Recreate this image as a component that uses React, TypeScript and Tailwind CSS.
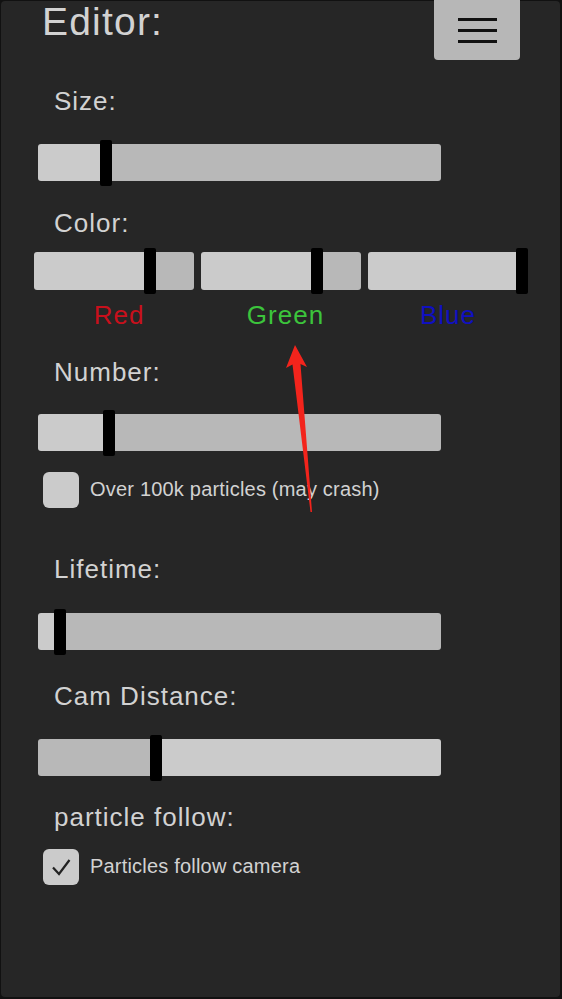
import React from "react"

type SliderProps = {
  left: number
  width: number
  reverse?: boolean
  full?: boolean
}

const LIGHT = "bg-[#cbcbcb]"
const DARK = "bg-[#b8b8b8]"

function Slider({ left, width, reverse, full }: SliderProps) {
  return (
    <div className="flex items-center h-[37px]" style={{ width }}>
      <div className={`h-full rounded-l-[3px] ${reverse ? DARK : LIGHT}`} style={{ width: left }} />
      <div className="w-[12px] h-[46px] shrink-0 rounded-[2px] bg-black" />
      {!full && <div className={`h-full flex-1 rounded-r-[3px] ${reverse ? LIGHT : DARK}`} />}
    </div>
  )
}

function ColorSlider({ left, full }: { left: number; full?: boolean }) {
  return (
    <div className="flex items-center h-[38px] w-[160px]">
      <div className={`h-full rounded-l-[3px] ${LIGHT} ${full ? "flex-1" : ""}`} style={full ? undefined : { width: left }} />
      <div className="w-[12px] h-[46px] shrink-0 rounded-[2px] bg-black" />
      {!full && <div className={`h-full flex-1 rounded-r-[3px] ${DARK}`} />}
    </div>
  )
}

function Label({ children, className = "" }: { children: React.ReactNode; className?: string }) {
  return <div className={`pl-[53px] text-[26px] leading-none tracking-[1px] text-[#d2d2d2] ${className}`}>{children}</div>
}

function Check({ checked, text, className = "" }: { checked?: boolean; text: string; className?: string }) {
  return (
    <div className={`flex items-center pl-[42px] gap-[11px] ${className}`}>
      <div className="w-[36px] h-[36px] rounded-[6px] bg-[#cbcbcb] flex items-center justify-center">
        {checked && (
          <svg width="22" height="20" viewBox="0 0 22 20">
            <path d="M3 10.5 L9 17 L19.5 3" fill="none" stroke="#222" strokeWidth="2.2" />
          </svg>
        )}
      </div>
      <span className="text-[20px] leading-none tracking-[0.2px] text-[#d2d2d2] -mt-[3px]">{text}</span>
    </div>
  )
}

export default function App() {
  return (
    <div className="w-[562px] h-[999px] bg-[#111] pl-px pr-[2px] pb-[2px] pt-px" style={{ fontFamily: '"Liberation Sans", Arial, sans-serif' }}>
      <div className="relative h-full rounded-[4px] bg-[#262626]">
        <div className="flex justify-between h-[59px]">
          <div className="pl-[41px] pt-px text-[39px] leading-[40px] tracking-[1.2px] text-[#d2d2d2]">Editor:</div>
          <button className="-mt-px mr-[40px] w-[86px] h-[60px] rounded-b-[4px] bg-[#b7b7b7] flex flex-col items-center justify-center gap-[8px]">
            <span className="block w-[39px] h-[3px] bg-[#111]" />
            <span className="block w-[39px] h-[3px] bg-[#111]" />
            <span className="block w-[39px] h-[3px] bg-[#111]" />
          </button>
        </div>

        <Label className="mt-[28px]">Size:</Label>
        <div className="mt-[30px] pl-[37px]">
          <Slider left={62} width={403} />
        </div>

        <Label className="mt-[29px]">Color:</Label>
        <div className="mt-[16px] pl-[33px] flex gap-[7px]">
          <ColorSlider left={110} />
          <ColorSlider left={110} />
          <ColorSlider left={147} full />
        </div>
        <div className="mt-[12px] pl-[33px] flex gap-[7px] text-[26px] leading-none tracking-[1px]">
          <div className="w-[160px] text-center pl-[10px] text-[#c8101c]">Red</div>
          <div className="w-[160px] text-center pl-[9px] text-[#3cc43c]">Green</div>
          <div className="w-[160px] text-center text-[#1010c0]">Blue</div>
        </div>

        <Label className="mt-[31px]">Number:</Label>
        <div className="mt-[29px] pl-[37px]">
          <Slider left={65} width={403} />
        </div>
        <Check className="mt-[21px]" text="Over 100k particles (may crash)" />

        <Label className="mt-[48px]">Lifetime:</Label>
        <div className="mt-[31px] pl-[37px]">
          <Slider left={16} width={403} />
        </div>

        <Label className="mt-[33px]">Cam Distance:</Label>
        <div className="mt-[30px] pl-[37px]">
          <Slider left={112} width={403} reverse />
        </div>

        <Label className="mt-[28px]">particle follow:</Label>
        <Check className="mt-[19px]" checked text="Particles follow camera" />

        <svg className="absolute left-0 top-0 pointer-events-none" width="562" height="999" viewBox="0 0 562 999">
          <path d="M294 344 L306 366 L299.5 363 L311 511 L309.5 511 L291.5 363.5 L285 367 Z" fill="#f3241c" />
        </svg>
      </div>
    </div>
  )
}
